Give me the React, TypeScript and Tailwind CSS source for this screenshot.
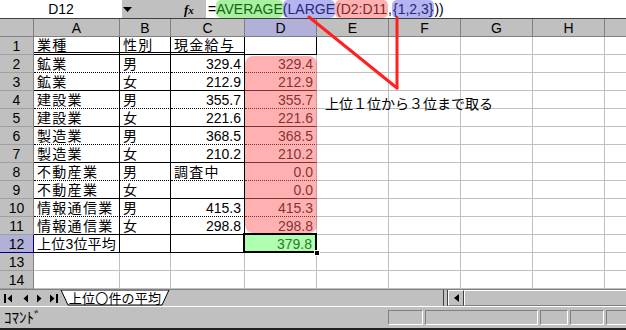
import React from "react";

type ColDef = { k: string; w: string; hdr: string };

const COLS: ColDef[] = [
  { k: "A", w: "w-[86px]", hdr: "bg-[#c0c0c0]" },
  { k: "B", w: "w-[51px]", hdr: "bg-[#c0c0c0]" },
  { k: "C", w: "w-[74px]", hdr: "bg-[#c0c0c0]" },
  { k: "D", w: "w-[72px]", hdr: "bg-[#b0b0d8] border-b-[#000080]" },
  { k: "E", w: "w-[72px]", hdr: "bg-[#c0c0c0]" },
  { k: "F", w: "w-[72px]", hdr: "bg-[#c0c0c0]" },
  { k: "G", w: "w-[72px]", hdr: "bg-[#c0c0c0]" },
  { k: "H", w: "w-[72px]", hdr: "bg-[#c0c0c0]" },
  { k: "", w: "w-[72px]", hdr: "bg-[#c0c0c0]" },
];

const DATA: Record<number, [string, string, string, string]> = {
  1: ["業種", "性別", "現金給与", ""],
  2: ["鉱業", "男", "329.4", "329.4"],
  3: ["鉱業", "女", "212.9", "212.9"],
  4: ["建設業", "男", "355.7", "355.7"],
  5: ["建設業", "女", "221.6", "221.6"],
  6: ["製造業", "男", "368.5", "368.5"],
  7: ["製造業", "女", "210.2", "210.2"],
  8: ["不動産業", "男", "調査中", "0.0"],
  9: ["不動産業", "女", "", "0.0"],
  10: ["情報通信業", "男", "415.3", "415.3"],
  11: ["情報通信業", "女", "298.8", "298.8"],
  12: ["上位3位平均", "", "", "379.8"],
  13: ["", "", "", ""],
  14: ["", "", "", ""],
};

function bottomFor(n: number): string {
  if (n === 1) return "border-b-[3px] [border-bottom-style:double] border-b-black";
  if (n >= 2 && n <= 11) return n % 2 === 0 ? "[border-bottom-style:dotted] border-b-black" : "border-b-black";
  if (n === 12) return "border-b-black";
  return "border-b-[#c0c0c0]";
}

function isNum(s: string) {
  return /^[0-9.]+$/.test(s);
}

function Cell({ w, cls, text, right, tight }: { w: string; cls: string; text: string; right?: boolean; tight?: boolean }) {
  return (
    <div
      className={`${w} shrink-0 h-full border-r border-b flex items-center overflow-hidden whitespace-nowrap text-[14px] leading-none ${cls} ${
        right ? "justify-end pr-[3px]" : tight ? "justify-start pl-[3px] tracking-[0.2px]" : "justify-start pl-[3px] tracking-[1.3px]"
      }`}
    >
      {text}
    </div>
  );
}

function Row({ n }: { n: number }) {
  const [a, b, c, d] = DATA[n];
  const inTable = n <= 12;
  const bot = inTable ? bottomFor(n) : "border-b-[#c0c0c0]";
  const rAC = inTable ? "border-r-black" : "border-r-[#c0c0c0]";
  const dBot = n === 1 ? "border-b-black" : n <= 11 ? bottomFor(n) : n === 12 ? "border-b-black" : "border-b-[#c0c0c0]";
  const dRight = n === 1 || n === 12 ? "border-r-black" : "border-r-[#c0c0c0]";
  const hdr =
    n === 12
      ? "bg-[#b0b0d8] border-r-[#000080] border-b-[#000080]"
      : "bg-[#c0c0c0] border-r-[#808080] border-b-[#a0a0a0]";
  return (
    <div className="flex h-[18px] bg-white">
      <div className={`w-[34px] shrink-0 h-full border-r border-b flex items-center justify-center text-[14px] leading-none ${hdr}`}>
        {n}
      </div>
      <Cell w="w-[86px]" cls={`${rAC} ${bot}`} text={a} tight={n === 12} />
      <Cell w="w-[51px]" cls={`${rAC} ${bot}`} text={b} />
      <Cell w="w-[74px]" cls={`${rAC} ${bot}`} text={c} right={isNum(c)} />
      {n === 12 ? (
        <div className="w-[72px] shrink-0 h-full relative border-r border-b border-r-black border-b-black bg-[#b0ffb0] text-[#2a7a2a] flex items-center justify-end pr-[4px] text-[14px] leading-none">
          {d}
          <div className="absolute left-[-2px] top-[-2px] w-[74px] h-[20px] border-2 border-black" />
          <div className="absolute right-[-4px] bottom-[-4px] w-[6px] h-[6px] bg-black border border-white z-10" />
        </div>
      ) : (
        <Cell w="w-[72px]" cls={`${dRight} ${dBot}`} text={d} right />
      )}
      {COLS.slice(4).map((col, i) => (
        <div key={i} className={`${col.w} shrink-0 h-full border-r border-b border-r-[#c0c0c0] border-b-[#c0c0c0]`} />
      ))}
    </div>
  );
}

function Tri({ dir, bar }: { dir: "l" | "r"; bar?: boolean }) {
  return (
    <svg width="9" height="9" viewBox="0 0 9 9">
      {dir === "l" ? (
        <>
          {bar && <rect x="0" y="0" width="2" height="9" fill="#000" />}
          <polygon points={bar ? "8,0.5 8,8.5 3.5,4.5" : "7,0.5 7,8.5 2.5,4.5"} fill="#000" />
        </>
      ) : (
        <>
          {bar && <rect x="7" y="0" width="2" height="9" fill="#000" />}
          <polygon points={bar ? "1,0.5 1,8.5 5.5,4.5" : "2,0.5 2,8.5 6.5,4.5"} fill="#000" />
        </>
      )}
    </svg>
  );
}

export default function App() {
  return (
    <div className="relative w-[626px] h-[330px] overflow-hidden bg-[#c0c0c0] text-black [font-family:'Liberation_Sans','Noto_Sans_CJK_JP',sans-serif]">
      {/* formula bar */}
      <div className="flex h-[19px] border-b border-[#404040]">
        <div className="w-[122px] shrink-0 bg-white flex items-center justify-center text-[14px] leading-none">D12</div>
        <div className="w-[84px] shrink-0 bg-[#c0c0c0] flex items-center">
          <svg width="9" height="5" viewBox="0 0 9 5" className="ml-[1px]">
            <polygon points="0,0 9,0 4.5,5" fill="#000" />
          </svg>
          <span className="ml-[52px] italic font-bold text-[13px] leading-none [font-family:'Liberation_Serif',serif]">f<span className="text-[11px]">x</span></span>
        </div>
        <div className="flex-1 bg-white flex items-center text-[14px] leading-none whitespace-nowrap pl-[2px]">
          <span>=</span>
          <span className="bg-[#a8f0a0] text-[#146414] rounded-[5px] py-[2px]">AVERAGE</span>
          <span className="bg-[#b4b4f0] text-[#28287a] rounded-[5px] py-[2px]">(LARGE</span>
          <span className="bg-[#ffb0b0] text-[#7a2828] rounded-[5px] py-[2px] px-[1px]">(D2:D11</span>
          <span>,</span>
          <span className="bg-[#b4b4f0] text-[#28287a] rounded-[5px] py-[2px] px-[1px]">{"{1,2,3}"}</span>
          <span>))</span>
        </div>
      </div>

      {/* column headers */}
      <div className="flex h-[18px]">
        <div className="w-[34px] shrink-0 h-full bg-[#c0c0c0] border-r border-b border-[#808080]" />
        {COLS.map((col, i) => (
          <div
            key={i}
            className={`${col.w} shrink-0 h-full border-r border-b border-r-[#808080] border-b-[#808080] flex items-center justify-center text-[14px] leading-none ${col.hdr}`}
          >
            {col.k}
          </div>
        ))}
      </div>

      {/* rows */}
      {[1, 2, 3, 4, 5, 6, 7, 8, 9, 10, 11, 12, 13, 14].map((n) => (
        <Row key={n} n={n} />
      ))}

      {/* sheet tab bar */}
      <div className="flex h-[17px] border-t border-[#808080] bg-[#c0c0c0]">
        <div className="w-[60px] shrink-0 flex items-center">
          <div className="ml-[4px]"><Tri dir="l" bar /></div>
          <div className="ml-[8px]"><Tri dir="l" /></div>
          <div className="ml-[5px]"><Tri dir="r" /></div>
          <div className="ml-[5px]"><Tri dir="r" bar /></div>
        </div>
        <div className="relative w-[110px] shrink-0 h-full flex items-center justify-center">
          <svg className="absolute inset-0" width="110" height="16" viewBox="0 0 110 16">
            <polygon points="1,0 109,0 102,15 8,15" fill="#fff" stroke="#000" strokeWidth="1" />
          </svg>
          <span className="relative text-[13px] leading-none tracking-[0.2px] pt-[1px]">上位〇件の平均</span>
        </div>
        <div className="flex-1" />
        <div className="w-[183px] shrink-0 flex h-full">
          <div className="w-[5px] h-full border-l border-r border-[#404040] bg-[#c0c0c0]" />
          <div className="w-[16px] h-full flex items-center justify-center border-t border-l border-white border-b border-r border-b-[#808080] border-r-[#404040]">
            <svg width="5" height="8" viewBox="0 0 5 8">
              <polygon points="5,0 5,8 0,4" fill="#000" />
            </svg>
          </div>
          <div className="flex-1 h-full border-t border-l border-white border-b border-b-[#808080]" />
        </div>
      </div>

      {/* status bar */}
      <div className="flex items-center h-[24px] border-t border-white border-b-2 border-b-[#202020] bg-[#c0c0c0]">
        <span className="pl-[4px] text-[15px] leading-none">ｺﾏﾝﾄﾞ</span>
        <div className="ml-auto flex gap-[2px] items-center h-[15px]">
          <div className="w-[35px] h-full border border-t-[#808080] border-l-[#808080] border-b-white border-r-white" />
          <div className="w-[113px] h-full border border-t-[#808080] border-l-[#808080] border-b-white border-r-white" />
          <div className="w-[28px] h-full border border-t-[#808080] border-l-[#808080] border-b-white border-r-white" />
          <div className="w-[34px] h-full border border-t-[#808080] border-l-[#808080] border-b-white border-r-white" />
          <div className="w-[20px] h-full border border-t-[#808080] border-l-[#808080] border-b-white border-r-0" />
        </div>
      </div>

      {/* pink highlight over D2:D11 */}
      <div className="absolute left-[245px] top-[56px] w-[72px] h-[177px] rounded-[8px] bg-[rgba(255,100,100,0.5)] pointer-events-none" />

      {/* red annotation lines */}
      <svg className="absolute left-0 top-0 pointer-events-none" width="626" height="330" viewBox="0 0 626 330">
        <path d="M309 17 L397 88" stroke="#ff2020" strokeWidth="3" strokeLinecap="round" fill="none" />
        <path d="M397 18 L397 88" stroke="#ff2020" strokeWidth="3" strokeLinecap="round" fill="none" />
      </svg>

      {/* annotation text */}
      <div className="absolute left-[325px] top-[94px] text-[14px] leading-[18px] whitespace-nowrap [font-family:'Noto_Sans_CJK_JP',sans-serif]">
        上位１位から３位まで取る
      </div>
    </div>
  );
}
